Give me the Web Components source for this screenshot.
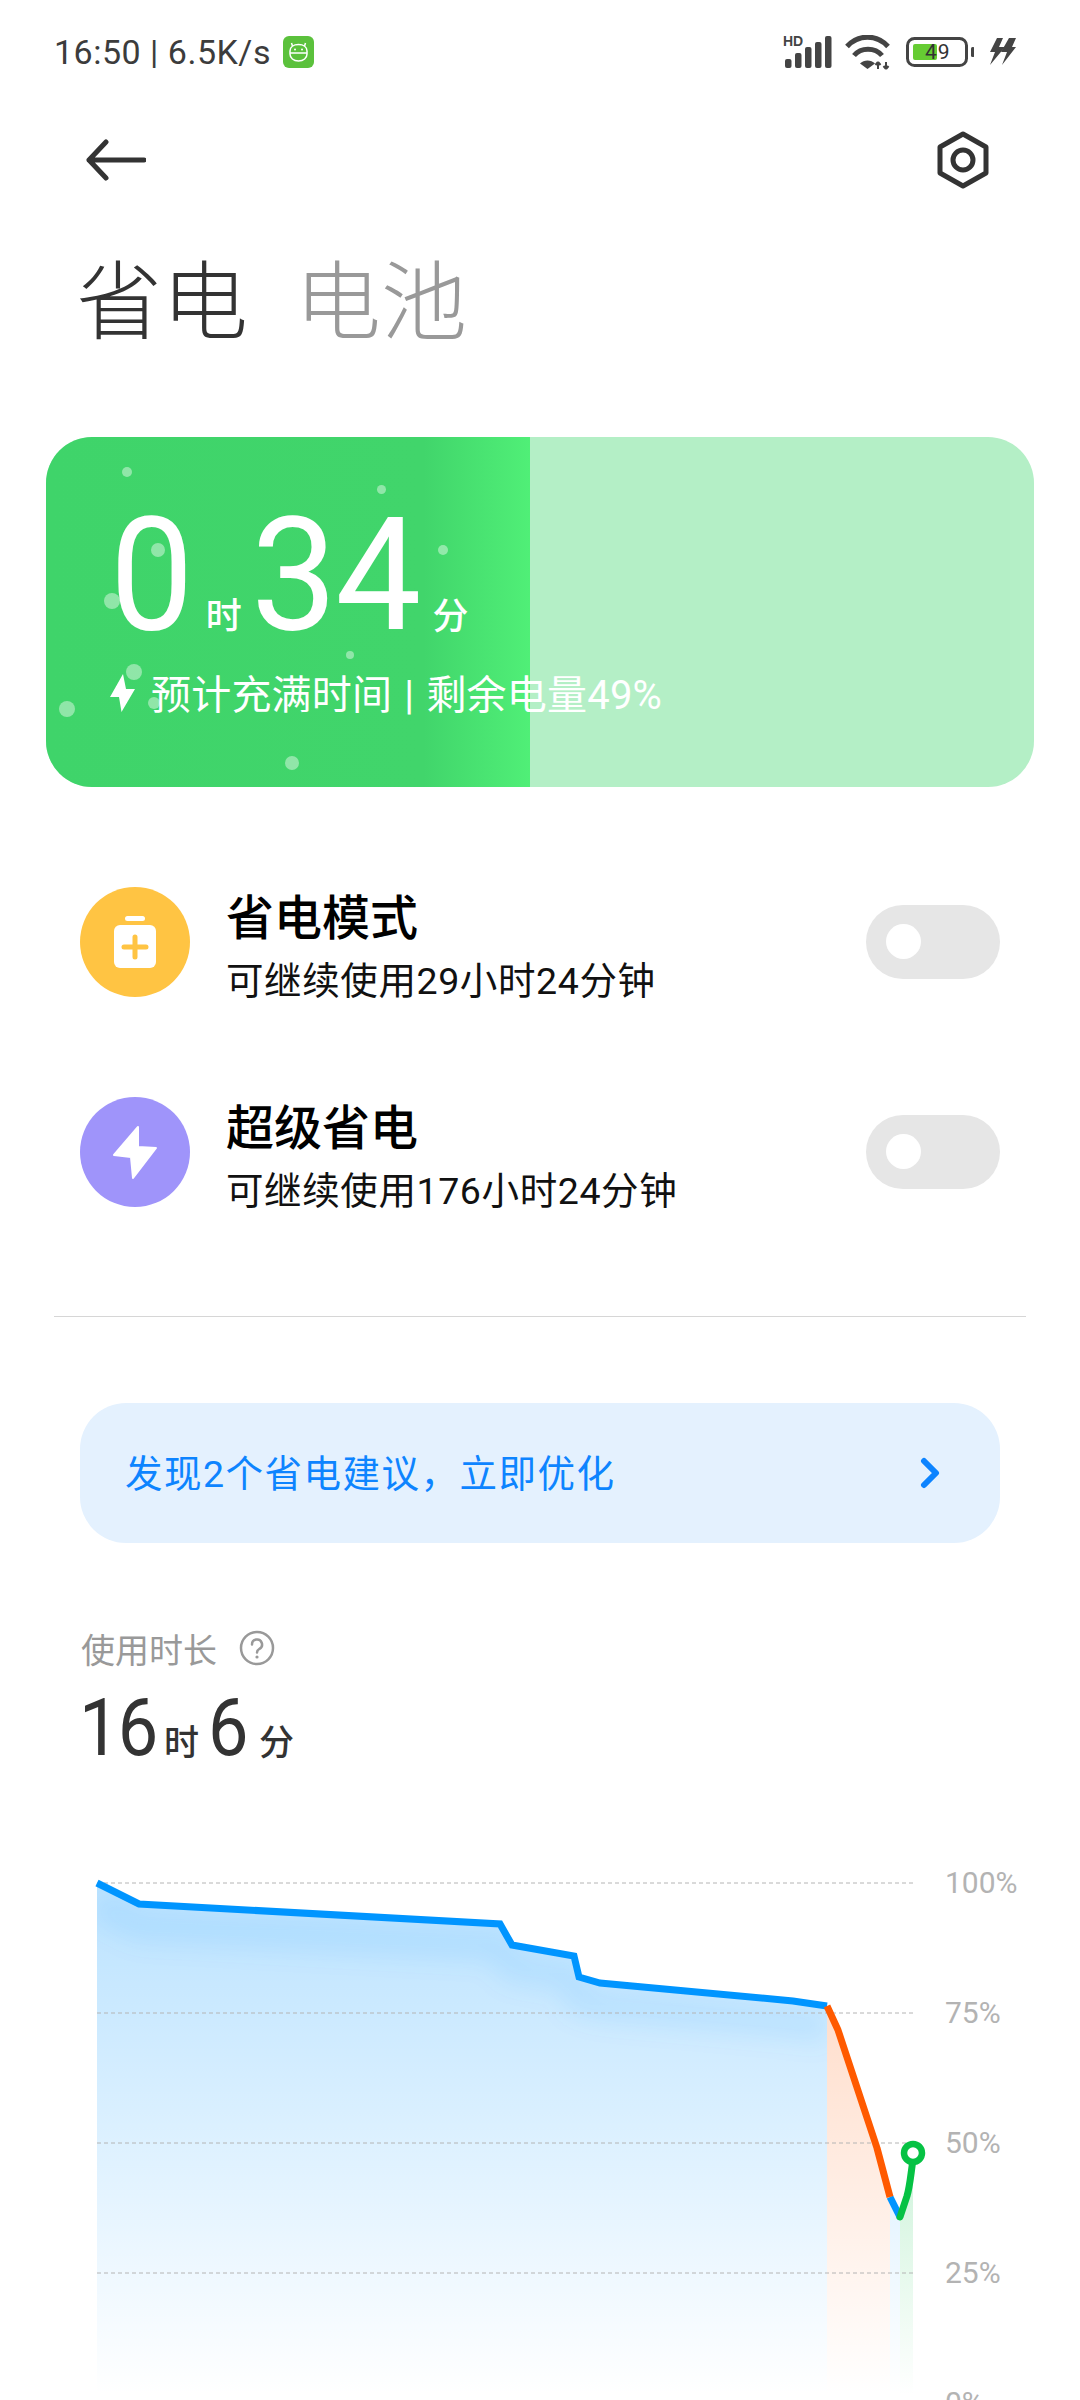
<!DOCTYPE html>
<html lang="zh">
<head>
<meta charset="utf-8">
<title>省电</title>
<style>
html, body { margin: 0; padding: 0; background: #fff; }
body {
    width: 1080px;
    height: 2400px;
    overflow: hidden;
    font-family: Roboto, "Noto Sans CJK SC", sans-serif;
    color: #333;
}
</style>
</head>
<body>
<status-bar></status-bar>
<nav-bar></nav-bar>
<page-title></page-title>
<charge-card></charge-card>
<mode-list>
    <mode-row name="省电模式" hint="可继续使用29小时24分钟" kind="saver"></mode-row>
    <mode-row name="超级省电" hint="可继续使用176小时24分钟" kind="super"></mode-row>
</mode-list>
<tip-banner>发现2个省电建议，立即优化</tip-banner>
<usage-summary></usage-summary>
<usage-chart></usage-chart>

<script>
class StatusBar extends HTMLElement {
    constructor() {
        super()
        this.root = this.attachShadow({mode: 'open'})
    }

    connectedCallback() {
        this.root.innerHTML = `
            <style>
            :host { display: flex; align-items: center; justify-content: space-between; height: 104px; padding: 0 63px 0 54px; color: #3c3c3c; }
            .left { display: flex; align-items: center; gap: 12px; font-size: 34px; letter-spacing: .5px; }
            .right { display: flex; align-items: center; }
            .signal { position: relative; width: 49px; height: 32px; margin-right: 13px; }
            .signal span { position: absolute; left: 0; top: -3px; font: 700 14px/16px "Liberation Sans", sans-serif; color: #444; }
            .battery { position: relative; width: 68px; height: 30px; margin: 0 14px 0 16px; }
            .battery span { position: absolute; left: 19px; top: 3px; font-size: 21px; line-height: 24px; letter-spacing: 1px; color: #333; }
            svg { display: block; }
            </style>
            <div class="left">
                <span>16:50 | 6.5K/s</span>
                <svg width="31" height="32" viewBox="0 0 31 32"><rect width="31" height="32" rx="6" fill="#5bc13c"/><g fill="none" stroke="#fff" stroke-width="1.500"><path d="M7 15c0-4 3.500-6.500 8.500-6.500S24 11 24 15v3c0 4-3.500 7-8.500 7S7 22 7 18z"/><path d="M9.500 10 8.500 7M21.500 10l1-3M7 17h17"/></g><circle cx="12" cy="13.500" r="1" fill="#fff"/><circle cx="19" cy="13.500" r="1" fill="#fff"/></svg>
            </div>
            <div class="right">
                <div class="signal">
                    <span>HD</span>
                    <svg width="49" height="32" viewBox="0 0 49 32" fill="#444"><rect x="2" y="23" width="6.500" height="9" rx="2"/><rect x="12" y="17" width="6.500" height="15" rx="2"/><rect x="22" y="11" width="6.500" height="21" rx="2"/><rect x="32" y="6" width="6.500" height="26" rx="2"/><rect x="42" y="0" width="6.500" height="32" rx="2"/></svg>
                </div>
                <svg width="45" height="35" viewBox="0 0 45 35" fill="none" stroke="#444"><path d="M2 11.500C13 -1 32 -1 43 11.500" stroke-width="5"/><path d="M9 20.500C16 12 30 12 37 20.500" stroke-width="5"/><path d="M22.500 34 15 28.500C19 24.500 26 24.500 30 28.500z" fill="#444" stroke="none"/><path d="M33 34V27M33 27l-2.500 3M33 27l2.500 3M41 27v7M41 34l-2.500-3M41 34l2.500-3" stroke-width="2"/></svg>
                <div class="battery">
                    <svg width="68" height="30" viewBox="0 0 68 30"><rect x="1.500" y="1.500" width="59" height="27" rx="7" fill="none" stroke="#444" stroke-width="3"/><rect x="7" y="7" width="24" height="16" rx="2" fill="#66cc33"/><rect x="65" y="10" width="3.500" height="10" rx="1.500" fill="#444"/></svg>
                    <span>49</span>
                </div>
                <svg width="29" height="28" viewBox="0 0 29 28" fill="#444"><path d="M9 0h6l-4 9h6L2 27l5-13H2z"/><path d="M21 0h7l-4 9h4L14 27l5-13h-6z"/></svg>
            </div>
        `
    }
}

class NavBar extends HTMLElement {
    constructor() {
        super()
        this.root = this.attachShadow({mode: 'open'})
    }

    connectedCallback() {
        this.root.innerHTML = `
            <style>
            :host { display: flex; align-items: center; justify-content: space-between; height: 112px; padding: 0 90px 0 86px; }
            svg { display: block; }
            </style>
            <svg width="60" height="42" viewBox="0 0 60 42" fill="none" stroke="#333" stroke-width="5" stroke-linecap="round" stroke-linejoin="round"><path d="M20 3 3 21l17 18M3 21h55"/></svg>
            <svg width="54" height="58" viewBox="0 0 54 58" fill="none" stroke="#333" stroke-width="5" stroke-linejoin="round"><path d="M27 3 50 16v26L27 55 4 42V16z"/><circle cx="27" cy="29" r="10"/></svg>
        `
    }
}

class PageTitle extends HTMLElement {
    constructor() {
        super()
        this.root = this.attachShadow({mode: 'open'})
    }

    connectedCallback() {
        this.root.innerHTML = `
            <style>
            :host { display: flex; gap: 47px; height: 121px; margin-top: 27px; padding-left: 76px; font-size: 86px; line-height: 121px; font-weight: 200; color: #333; }
            .off { color: #999; }
            </style>
            <span>省电</span><span class="off">电池</span>
        `
    }
}

class ChargeCard extends HTMLElement {
    constructor() {
        super()
        this.root = this.attachShadow({mode: 'open'})
    }

    connectedCallback() {
        // bubbles, card relative: x, y, radius
        const bubbles = [[81, 35, 5], [335, 52, 4.500], [112, 113, 7], [397, 113, 5], [66, 164, 8], [304, 218, 4], [88, 235, 8], [21, 272, 8], [108, 266, 6], [246, 326, 7]]
        const dots = bubbles.map(b => `<i style="left:${b[0] - b[2]}px;top:${b[1] - b[2]}px;width:${b[2] * 2}px;height:${b[2] * 2}px"></i>`).join('')
        this.root.innerHTML = `
            <style>
            :host { display: block; position: relative; box-sizing: border-box; width: 988px; height: 350px; margin: 73px 0 0 46px; padding: 58px 0 0 64px; border-radius: 46px; overflow: hidden; background: #b4efc6; color: #fff; }
            .fill { position: absolute; left: 0; top: 0; bottom: 0; width: 484px; background: linear-gradient(90deg, #3fd46a 0, #41d56b 78%, #50ef77 100%); }
            i { position: absolute; border-radius: 50%; background: rgba(255, 255, 255, .42); }
            .time, .sub { position: relative; }
            .time { display: flex; align-items: baseline; height: 160px; line-height: 160px; }
            .time b { display: inline-block; font-weight: 400; font-size: 158px; letter-spacing: -2px; transform-origin: left; }
            .time b.one { margin-right: -5px; transform: scaleX(.94); }
            .time b.two { margin-right: -5px; transform: scaleX(.97); }
            .time span { font-size: 36px; font-weight: 500; }
            .time span.h { margin: 0 9px 0 14px; }
            .time span.m { margin: 0 0 0 13px; }
            .sub { display: flex; align-items: center; gap: 15px; margin-top: 19px; font-size: 40px; line-height: 44px; word-spacing: 2px; letter-spacing: .2px; }
            .sub svg { margin-top: -6px; }
            svg { display: block; }
            </style>
            <div class="fill"></div>
            ${dots}
            <div class="time"><b class="one">0</b><span class="h">时</span><b class="two">34</b><span class="m">分</span></div>
            <div class="sub">
                <svg width="26" height="38" viewBox="0 0 26 38" fill="#fff"><path d="M13 0 0 23h9l2.500 15L25 15h-9z"/></svg>
                <span>预计充满时间 | 剩余电量49%</span>
            </div>
        `
    }
}

class ModeList extends HTMLElement {
    constructor() {
        super()
        this.root = this.attachShadow({mode: 'open'})
    }

    connectedCallback() {
        this.root.innerHTML = `
            <style>
            :host { display: block; margin-top: 50px; padding-bottom: 60px; position: relative; }
            .line { height: 1px; margin: 59px 54px 0; background: #d6d6d6; }
            </style>
            <slot></slot>
            <div class="line"></div>
        `
    }
}

class ModeRow extends HTMLElement {
    constructor() {
        super()
        this.root = this.attachShadow({mode: 'open'})
    }

    connectedCallback() {
        const saver = this.getAttribute('kind') === 'saver'
        const icon = saver
            ? `<rect x="45" y="29" width="20" height="5" rx="2.500" fill="#fff"/><rect x="34" y="38" width="42" height="43" rx="6" fill="#fff"/><path d="M55 50v20M44 60h22" stroke="#ffc443" stroke-width="5" stroke-linecap="round"/>`
            : `<path d="M58 30 34 58 51 60 53 81 76 51 58 50z" fill="#fff" stroke="#fff" stroke-width="2" stroke-linejoin="round"/>`
        this.root.innerHTML = `
            <style>
            :host { display: flex; align-items: center; height: 210px; padding: 0 80px; }
            .icon { flex: none; width: 110px; height: 110px; border-radius: 50%; background: ${saver ? '#ffc443' : '#9f94fa'}; }
            .text { flex: 1; margin-left: 36px; padding-top: 12px; color: #000; }
            .name { font-size: 48px; line-height: 58px; font-weight: 500; }
            .hint { font-size: 37.500px; letter-spacing: .6px; line-height: 50px; margin-top: 8px; color: #111; }
            .toggle { flex: none; position: relative; width: 134px; height: 74px; border-radius: 37px; background: #e6e6e6; }
            .toggle i { position: absolute; left: 20px; top: 19px; width: 35px; height: 35px; border-radius: 50%; background: #fff; }
            svg { display: block; }
            </style>
            <div class="icon"><svg width="110" height="110" viewBox="0 0 110 110">${icon}</svg></div>
            <div class="text">
                <div class="name">${this.getAttribute('name')}</div>
                <div class="hint">${this.getAttribute('hint')}</div>
            </div>
            <div class="toggle"><i></i></div>
        `
    }
}

class TipBanner extends HTMLElement {
    constructor() {
        super()
        this.root = this.attachShadow({mode: 'open'})
    }

    connectedCallback() {
        this.root.innerHTML = `
            <style>
            :host { display: flex; align-items: center; justify-content: space-between; box-sizing: border-box; width: 920px; height: 140px; margin: 26px 0 0 80px; padding: 0 59px 0 45px; border-radius: 46px; background: #e4f1fe; color: #0d84ff; font-size: 37.500px; letter-spacing: 1.500px; }
            span { margin-top: -5px; }
            svg { display: block; }
            </style>
            <span><slot></slot></span>
            <svg width="22" height="32" viewBox="0 0 22 32" fill="none" stroke="#0d84ff" stroke-width="6" stroke-linecap="round" stroke-linejoin="round"><path d="M5 4 17 16 5 28"/></svg>
        `
    }
}

class UsageSummary extends HTMLElement {
    constructor() {
        super()
        this.root = this.attachShadow({mode: 'open'})
    }

    connectedCallback() {
        this.root.innerHTML = `
            <style>
            :host { display: block; margin-top: 81px; padding-left: 81px; }
            .label { display: flex; align-items: center; gap: 22px; height: 48px; font-size: 34px; color: #999; }
            .value { display: flex; align-items: baseline; height: 88px; margin: 12px 0 0 -2px; color: #333; line-height: 88px; }
            .value b { display: inline-block; font-weight: 400; font-size: 80px; letter-spacing: -2px; transform: scaleX(.9); transform-origin: left; }
            .value b.one { margin-right: -9px; }
            .value b.two { margin-right: -4px; }
            .value span { font-size: 35px; font-weight: 500; }
            .value span.h { margin: 0 9px 0 8px; }
            .value span.m { margin: 0 0 0 12px; }
            svg { display: block; }
            </style>
            <div class="label">
                <span>使用时长</span>
                <svg width="36" height="36" viewBox="0 0 36 36" fill="none" stroke="#999" stroke-width="2.500"><circle cx="18" cy="18" r="16"/><path d="M13 14.500a5 5 0 1 1 7.500 4.300c-1.600 1-2.500 1.700-2.500 3.700" stroke-linecap="round"/><circle cx="18" cy="27" r="1.600" fill="#999" stroke="none"/></svg>
            </div>
            <div class="value"><b class="one">16</b><span class="h">时</span><b class="two">6</b><span class="m">分</span></div>
        `
    }
}

class UsageChart extends HTMLElement {
    constructor() {
        super()
        this.root = this.attachShadow({mode: 'open'})
    }

    connectedCallback() {
        const grid = [1883, 2013, 2143, 2273].map(y => `<path d="M97 ${y}H913"/>`).join('')
        const labels = ['100%', '75%', '50%', '25%', '0%'].map(t => `<div>${t}</div>`).join('')
        const blueTop = '97,1883 139,1904 500,1924 512,1945 574,1956 579,1977 600,1983 793,2001 827,2006'
        this.root.innerHTML = `
            <style>
            :host { display: grid; grid-template-columns: 945px auto; margin-top: 46px; height: 600px; }
            svg { display: block; }
            .labels div { height: 130px; line-height: 130px; font-size: 30px; color: #b3b3b3; }
            </style>
            <svg width="945" height="600" viewBox="0 1818 945 600">
                <defs>
                    <linearGradient id="fb" x1="0" y1="1883" x2="0" y2="2395" gradientUnits="userSpaceOnUse"><stop offset="0" stop-color="#0095ff" stop-opacity=".27"/><stop offset="1" stop-color="#0095ff" stop-opacity="0"/></linearGradient>
                    <linearGradient id="fo" x1="0" y1="2006" x2="0" y2="2395" gradientUnits="userSpaceOnUse"><stop offset="0" stop-color="#ff5a00" stop-opacity=".2"/><stop offset="1" stop-color="#ff5a00" stop-opacity="0"/></linearGradient>
                    <linearGradient id="fg" x1="0" y1="2150" x2="0" y2="2395" gradientUnits="userSpaceOnUse"><stop offset="0" stop-color="#06c244" stop-opacity=".2"/><stop offset="1" stop-color="#06c244" stop-opacity="0"/></linearGradient>
                    <filter id="soft" x="-5%" y="-50%" width="110%" height="250%"><feGaussianBlur stdDeviation="12"/></filter>
                    <clipPath id="under"><polygon points="${blueTop} 827,2400 97,2400"/></clipPath>
                </defs>
                <polygon points="${blueTop} 827,2400 97,2400" fill="url(#fb)"/>
                <g clip-path="url(#under)"><polyline points="${blueTop}" transform="translate(0 22)" fill="none" stroke="#0095ff" stroke-opacity=".09" stroke-width="30" filter="url(#soft)"/></g>
                <polygon points="827,2006 838,2030 877,2148 890,2197 890,2400 827,2400" fill="url(#fo)"/>
                <polygon points="890,2197 900,2217 900,2400 890,2400" fill="url(#fb)"/>
                <polygon points="900,2217 908,2193 911,2163 913,2153 913,2400 900,2400" fill="url(#fg)"/>
                <g stroke="#b4b4b4" stroke-width="1" stroke-dasharray="4 3" fill="none">${grid}</g>
                <polyline points="${blueTop}" fill="none" stroke="#0095ff" stroke-width="7"/>
                <polyline points="890,2197 900,2217" fill="none" stroke="#0095ff" stroke-width="7"/>
                <polyline points="827,2006 838,2030 877,2148 890,2197" fill="none" stroke="#ff5a00" stroke-width="7" stroke-linejoin="round"/>
                <path d="M900 2217 907 2196C910 2186 911 2172 913 2160" fill="none" stroke="#06c244" stroke-width="7" stroke-linecap="round" stroke-linejoin="round"/>
                <circle cx="913" cy="2153" r="9" fill="#fff" stroke="#06c244" stroke-width="6.500"/>
            </svg>
            <div class="labels">${labels}</div>
        `
    }
}

window.customElements.define('status-bar', StatusBar)
window.customElements.define('nav-bar', NavBar)
window.customElements.define('page-title', PageTitle)
window.customElements.define('charge-card', ChargeCard)
window.customElements.define('mode-list', ModeList)
window.customElements.define('mode-row', ModeRow)
window.customElements.define('tip-banner', TipBanner)
window.customElements.define('usage-summary', UsageSummary)
window.customElements.define('usage-chart', UsageChart)
</script>
</body>
</html>
